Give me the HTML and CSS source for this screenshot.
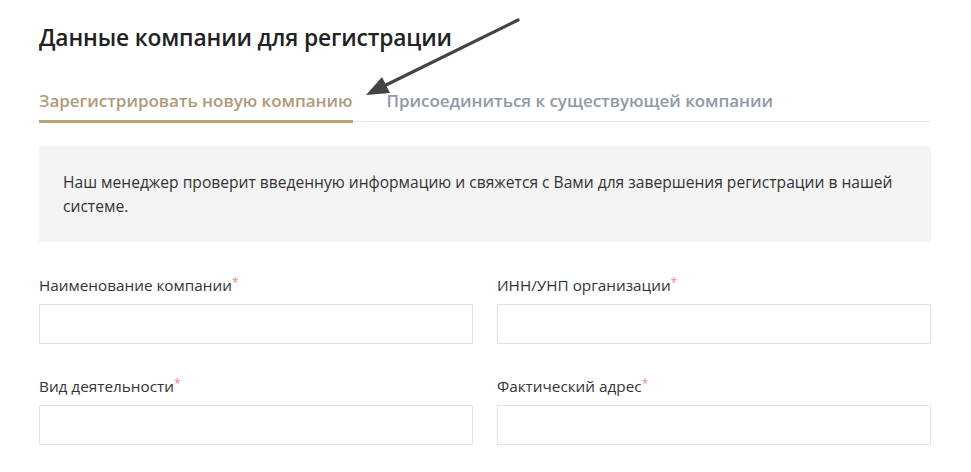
FILE: index.html
```html
<!DOCTYPE html>
<html lang="ru">
<head>
<meta charset="utf-8">
<link rel="stylesheet" href="styles.css">
</head>
<body>
<div class="page">
  <h2 class="title">Данные компании для регистрации</h2>
  <div class="tabs">
    <div class="tab tab-active">Зарегистрировать новую компанию</div>
    <div class="tab">Присоединиться к существующей компании</div>
  </div>
  <div class="notice">Наш менеджер проверит введенную информацию и свяжется с Вами для завершения регистрации в нашей системе.</div>
  <div class="form">
    <div class="field">
      <label class="label">Наименование компании<span class="req">*</span></label>
      <div class="input"></div>
    </div>
    <div class="field">
      <label class="label">ИНН/УНП организации<span class="req">*</span></label>
      <div class="input"></div>
    </div>
    <div class="field">
      <label class="label">Вид деятельности<span class="req">*</span></label>
      <div class="input"></div>
    </div>
    <div class="field">
      <label class="label">Фактический адрес<span class="req">*</span></label>
      <div class="input"></div>
    </div>
  </div>
  <svg class="arrow" width="971" height="472" viewBox="0 0 971 472">
    <line x1="518" y1="20" x2="382" y2="87" stroke="#444" stroke-width="3.2" stroke-linecap="round"/>
    <polygon points="366,95 382,77 390,93" fill="#444"/>
  </svg>
</div>
</body>
</html>
```
FILE: styles.css
```css
* { box-sizing: border-box; }
html, body { margin: 0; padding: 0; background: #fff; }
body { font-family: "Open Sans", "Noto Sans", sans-serif; color: #333; }
.page { position: relative; width: 971px; height: 472px; padding: 23px 40px 0 39px; overflow: hidden; }
.title { margin: 0; font-size: 22.8px; line-height: 30px; font-weight: 600; color: #222; letter-spacing: -0.15px; }
.tabs { display: flex; gap: 34px; margin-top: 36px; border-bottom: 1px solid #e5e5e5; width: 892px; }
.tab { font-size: 17px; line-height: 24px; font-weight: 600; color: #8f9aa5; padding-bottom: 7px; letter-spacing: -0.03px; }
.tab-active { color: #ad9b7a; border-bottom: 3px solid #b3a17b; margin-bottom: -2px; }
.notice { margin-top: 24px; width: 892px; background: #f4f4f4; padding: 24px; font-size: 15.6px; line-height: 24px; color: #333; }
.form { display: grid; grid-template-columns: 434px 434px; column-gap: 24px; row-gap: 30px; margin-top: 31px; }
.field { display: flex; flex-direction: column; gap: 7px; }
.label { display: block; height: 24px; font-size: 15.3px; line-height: 24px; color: #333; }
.req { color: #e58a8a; font-size: 12px; line-height: 0; position: relative; top: -4px; }
.input { height: 40px; border: 1px solid #e3e3e3; background: #fff; }
.arrow { position: absolute; left: 0; top: 0; pointer-events: none; }
```
